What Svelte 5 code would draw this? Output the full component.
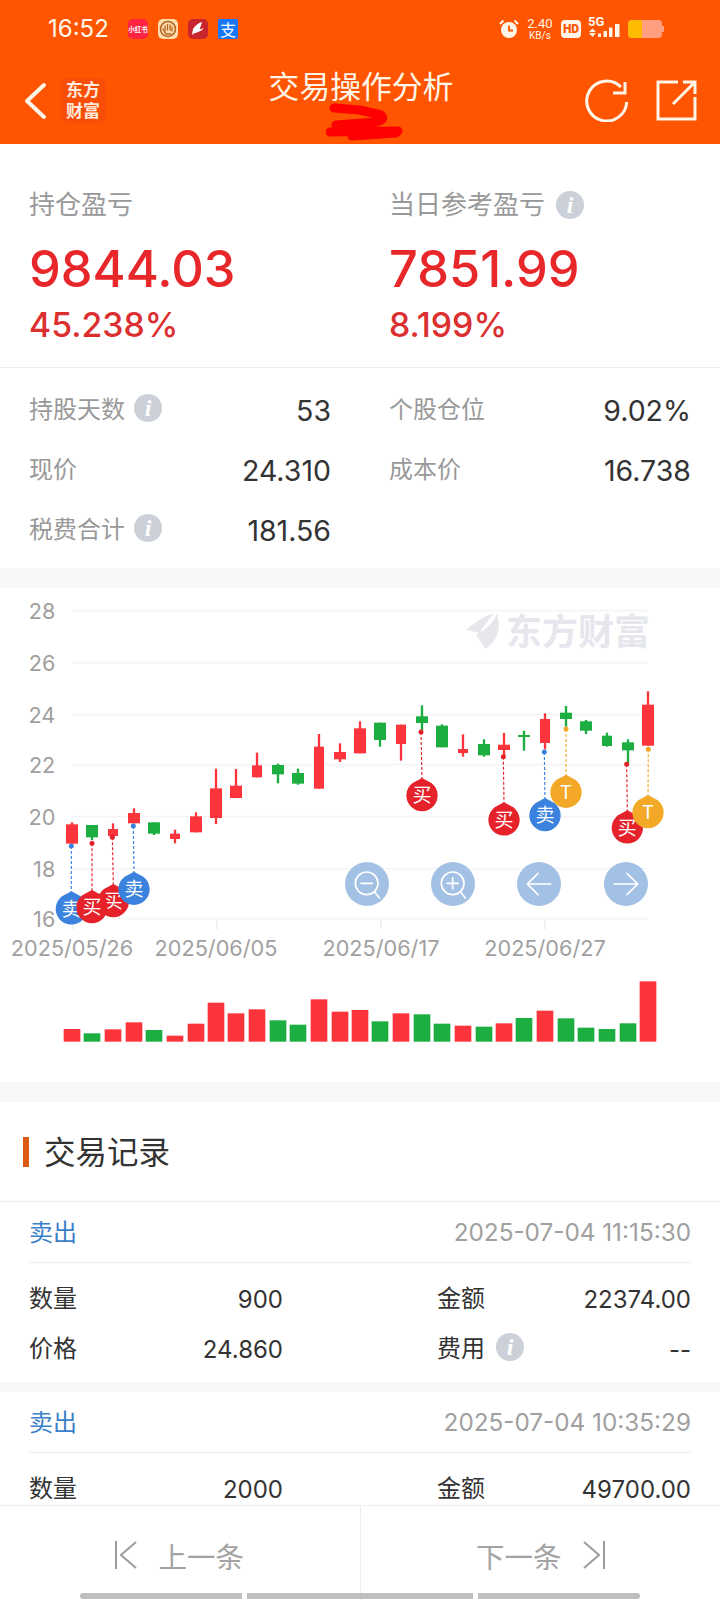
<script>
  const RED = '#fc343c';
  const GREEN = '#1cae41';

  // chart coords are 3x screen px, y measured from screen y=590
  // [left, right, bodyTop, bodyBottom, wickTop, wickBottom, up?]
  const candles = [
    [198, 234, 703, 761, 697, 761, 1],
    [258, 294, 705, 742, 705, 750, 0],
    [324, 354, 717, 738, 700, 748, 1],
    [384, 420, 669, 700, 655, 700, 1],
    [444, 480, 697, 731, 697, 735, 0],
    [510, 540, 731, 747, 719, 760, 1],
    [570, 606, 679, 727, 667, 727, 1],
    [630, 666, 595, 684, 536, 702, 1],
    [690, 726, 587, 624, 537, 624, 1],
    [756, 786, 526, 562, 488, 562, 1],
    [816, 852, 525, 553, 521, 580, 0],
    [876, 912, 549, 581, 536, 584, 0],
    [942, 972, 470, 596, 432, 596, 1],
    [1002, 1038, 486, 508, 460, 516, 1],
    [1062, 1098, 415, 490, 394, 490, 1],
    [1122, 1158, 398, 450, 398, 470, 0],
    [1188, 1218, 404, 462, 404, 512, 1],
    [1248, 1284, 379, 399, 346, 420, 0],
    [1308, 1344, 407, 472, 403, 472, 0],
    [1374, 1404, 477, 489, 433, 500, 1],
    [1434, 1470, 462, 496, 448, 500, 0],
    [1494, 1530, 464, 480, 429, 500, 1],
    [1554, 1590, 435, 441, 422, 482, 0],
    [1620, 1650, 387, 459, 370, 478, 1],
    [1680, 1716, 368, 387, 348, 410, 0],
    [1740, 1776, 394, 422, 390, 432, 0],
    [1806, 1836, 437, 468, 428, 470, 0],
    [1866, 1902, 457, 481, 448, 520, 0],
    [1926, 1962, 344, 467, 304, 467, 1]
  ];

  // tops of the volume bars, bottom is shared
  const volumes = [207, 220, 208, 187, 210, 227, 191, 128, 160, 148, 181, 194, 118, 155, 150, 184, 160, 163, 191, 197, 200, 190, 174, 152, 175, 203, 207, 190, 64];

  const gridY = [62, 218, 374, 524, 680, 836, 986];
  const yLabels = ['28', '26', '24', '22', '20', '18', '16'];

  const dates = [
    { x: 216, tick: 219, label: '2025/05/26' },
    { x: 648, tick: 651, label: '2025/06/05' },
    { x: 1143, tick: 1143, label: '2025/06/17' },
    { x: 1635, tick: 1635, label: '2025/06/27' }
  ];

  const markerColors = { 卖: '#3a82de', 买: '#e5222a', T: '#f3a828' };

  const markers = [
    { x: 214, y: 957, dotX: 214, dotY: 768, t: '卖' },
    { x: 340, y: 935, dotX: 337, dotY: 742, t: '买' },
    { x: 276, y: 953, dotX: 276, dotY: 760, t: '买' },
    { x: 402, y: 898, dotX: 400, dotY: 708, t: '卖' },
    { x: 1266, y: 617, dotX: 1263, dotY: 426, t: '买' },
    { x: 1512, y: 690, dotX: 1510, dotY: 500, t: '买' },
    { x: 1635, y: 677, dotX: 1633, dotY: 486, t: '卖' },
    { x: 1698, y: 607, dotX: 1698, dotY: 417, t: 'T' },
    { x: 1882, y: 714, dotX: 1880, dotY: 523, t: '买' },
    { x: 1944, y: 668, dotX: 1945, dotY: 478, t: 'T' }
  ];

  function drop(x, y) {
    return `M${x} ${y - 53}L${x + 28} ${y - 38}A47 47 0 1 1 ${x - 28} ${y - 38}Z`;
  }

  const records = [
    { side: '卖出', time: '2025-07-04 11:15:30', qty: '900', amount: '22374.00', price: '24.860', fee: '--' },
    { side: '卖出', time: '2025-07-04 10:35:29', qty: '2000', amount: '49700.00' }
  ];
</script>

{#snippet info()}
  <span class="info">i</span>
{/snippet}

<div class="page">
  <header class="top">
    <div class="status">
      <span class="time">16:52</span>
      <div class="apps">
        <span class="app app-xhs">小红书</span>
        <span class="app app-hand">
          <svg viewBox="0 0 20 20" width="20" height="20">
            <circle cx="10" cy="10" r="7.5" fill="none" stroke="#b5651d" stroke-width="1.6" />
            <path d="M7 12V7M9.5 11V5.5M12 11V6M14 12V8M5 10l3 5h5" fill="none" stroke="#b5651d" stroke-width="1.3" stroke-linecap="round" />
          </svg>
        </span>
        <span class="app app-flash">
          <svg viewBox="0 0 20 20" width="20" height="20">
            <path d="M14 3C10 4 7 7 5 10L4 16C7 13 12 14 16 9L11.5 10.5C12.5 8 13.5 5.5 14 3Z" fill="#fff" />
          </svg>
        </span>
        <span class="app app-ali">支</span>
      </div>
      <div class="sys">
        <svg class="alarm" viewBox="0 0 20 20" width="20" height="20">
          <circle cx="10" cy="11" r="8" fill="#fff6ea" />
          <path d="M10 6.5V11.5H14" fill="none" stroke="#ff5500" stroke-width="1.8" />
          <path d="M1 5 4.5 1.5M19 5 15.5 1.5" stroke="#fff6ea" stroke-width="2" />
        </svg>
        <span class="speed"><b>2.40</b><i>KB/s</i></span>
        <span class="hd">HD</span>
        <svg class="signal" viewBox="0 -6 34 28" width="34" height="28">
          <text x="0" y="10" class="fiveg">5G</text>
          <path d="M1 16 4.5 12.5 8 16ZM1 17H8L4.5 21Z" fill="#fff6ea" />
          <path d="M10 17.5h3V21H10ZM15.5 15h3.5V21H15.5ZM21 11.5h3.5V21H21ZM27 8h4.5V21H27Z" fill="#fff6ea" />
        </svg>
        <span class="battery"><span class="level"></span></span>
      </div>
    </div>
    <nav class="bar">
      <div class="bar-left">
        <svg viewBox="0 0 24 40" width="24" height="40">
          <path d="M20 4 3 20l17 16" fill="none" stroke="#fff6ea" stroke-width="4" stroke-linecap="round" stroke-linejoin="round" />
        </svg>
        <span class="logo">东方<br />财富</span>
      </div>
      <h1>交易操作分析</h1>
      <div class="bar-right">
        <svg viewBox="0 0 44 44" width="44" height="44">
          <path d="M36 9A20 20 0 1 0 41.7 24" fill="none" stroke="#fff6ea" stroke-width="3" />
          <path d="M40 4V15H28" fill="none" stroke="#fff6ea" stroke-width="3" />
        </svg>
        <svg viewBox="0 0 44 44" width="44" height="44">
          <path d="M24 4H4V41H41V19M19 26 41 4M29 4H41V16" fill="none" stroke="#fff6ea" stroke-width="3" />
        </svg>
      </div>
    </nav>
    <svg class="scribble" viewBox="0 0 84 44" width="84" height="44">
      <path d="M8 8 34 10 55 15Q60 20 50 22L10 25M4 32 72 31M26 36 70 33" fill="none" stroke="#ff0000" stroke-width="9" stroke-linecap="round" stroke-linejoin="round" />
    </svg>
  </header>

  <div class="content">
    <section class="summary">
      <div class="totals">
        <div class="total">
          <div class="total-label">持仓盈亏</div>
          <div class="total-value">9844.03</div>
          <div class="total-pct">45.238%</div>
        </div>
        <div class="total">
          <div class="total-label">当日参考盈亏 {@render info()}</div>
          <div class="total-value">7851.99</div>
          <div class="total-pct">8.199%</div>
        </div>
      </div>
      <div class="stats">
        <div class="stat"><span class="stat-label">持股天数 {@render info()}</span><span class="stat-value">53</span></div>
        <div class="stat"><span class="stat-label">个股仓位</span><span class="stat-value">9.02%</span></div>
        <div class="stat"><span class="stat-label">现价</span><span class="stat-value">24.310</span></div>
        <div class="stat"><span class="stat-label">成本价</span><span class="stat-value">16.738</span></div>
        <div class="stat"><span class="stat-label">税费合计 {@render info()}</span><span class="stat-value">181.56</span></div>
      </div>
    </section>

    <section class="chart">
      <svg viewBox="0 -6 2160 1482" width="720" height="494">
        {#each gridY as y}
          <line x1="216" x2="1944" y1={y} y2={y} stroke="#f5f5f5" stroke-width="5" />
        {/each}

        <!-- watermark -->
        <path d="M1398 120C1420 100 1450 80 1482 70 1465 90 1450 110 1440 128 1425 125 1410 122 1398 120Z M1490 72C1505 110 1495 150 1455 178 1450 165 1440 150 1428 135 1455 120 1480 100 1490 72Z" fill="#e6e7ec" />
        <text class="mark" x="1518" y="165">东方财富</text>

        {#each yLabels as label, i}
          <text class="axis" x="166" y={gridY[i] + 24} text-anchor="end">{label}</text>
        {/each}
        {#each dates as d}
          <line x1={d.tick} x2={d.tick} y1="986" y2="1018" stroke="#eeeeee" stroke-width="5" />
          <text class="axis" x={d.x} y="1098" text-anchor="middle">{d.label}</text>
        {/each}

        {#each candles as [l, r, top, bottom, wickTop, wickBottom, up]}
          <rect x={(l + r) / 2 - 3.5} y={wickTop} width="7" height={wickBottom - wickTop} fill={up ? RED : GREEN} />
          <rect x={l} y={top} width={r - l} height={bottom - top} fill={up ? RED : GREEN} />
        {/each}

        {#each volumes as top, i}
          <rect x={(candles[i][0] + candles[i][1]) / 2 - 25} y={1110 + top} width="50" height={245 - top} fill={candles[i][6] ? RED : GREEN} />
        {/each}

        {#each markers as m}
          <line x1={m.dotX} x2={m.x} y1={m.dotY} y2={m.y - 50} stroke={markerColors[m.t]} stroke-width="3.5" stroke-dasharray="9 6" />
          <circle cx={m.dotX} cy={m.dotY} r="7.5" fill={markerColors[m.t]} />
          <path d={drop(m.x, m.y)} fill={markerColors[m.t]} />
          <text class="marker" x={m.x} y={m.y + 20} text-anchor="middle">{m.t}</text>
        {/each}

        <g fill="none" stroke="#fff" stroke-width="5" stroke-linecap="round">
          <circle cx="1101" cy="882" r="66" fill="#a3c1e4" stroke="none" />
          <circle cx="1100" cy="880" r="34" />
          <path d="M1083 880H1117M1124 906 1138 924" />
          <circle cx="1359" cy="882" r="66" fill="#a3c1e4" stroke="none" />
          <circle cx="1358" cy="880" r="34" />
          <path d="M1341 880H1375M1358 863V897M1382 906 1396 924" />
          <circle cx="1617" cy="882" r="66" fill="#a3c1e4" stroke="none" />
          <path d="M1652 882H1582M1614 850 1582 882 1614 914" />
          <circle cx="1878" cy="882" r="66" fill="#a3c1e4" stroke="none" />
          <path d="M1843 882H1913M1881 850 1913 882 1881 914" />
        </g>
      </svg>
    </section>

    <section class="trades">
      <h2><span class="accent"></span><span class="trades-title">交易记录</span></h2>
      {#each records as rec}
        <article class="record">
          <div class="record-head">
            <span class="side">{rec.side}</span>
            <span class="when">{rec.time}</span>
          </div>
          <div class="record-body">
            <div class="cell"><span class="cell-label">数量</span><span class="num">{rec.qty}</span></div>
            <div class="cell"><span class="cell-label">金额</span><span class="num">{rec.amount}</span></div>
            {#if rec.price}
              <div class="cell"><span class="cell-label">价格</span><span class="num">{rec.price}</span></div>
              <div class="cell"><span class="cell-label">费用 {@render info()}</span><span class="num">{rec.fee}</span></div>
            {/if}
          </div>
        </article>
      {/each}
    </section>
  </div>

  <footer class="pager">
    <div class="pager-btn">
      <svg viewBox="0 0 22 30" width="22" height="30">
        <path d="M1 1V29M21 2 6 15 21 28" fill="none" stroke="#9c9c9c" stroke-width="2" />
      </svg>
      <span>上一条</span>
    </div>
    <div class="pager-btn next">
      <span>下一条</span>
      <svg viewBox="0 0 22 30" width="22" height="30">
        <path d="M21 1V29M1 2 16 15 1 28" fill="none" stroke="#9c9c9c" stroke-width="2" />
      </svg>
    </div>
    <div class="pills">
      <span class="pill pill-a"></span>
      <span class="pill pill-b"></span>
      <span class="pill pill-c"></span>
    </div>
  </footer>
</div>

<style>
  :global(body) {
    margin: 0;
    background: #f7f7f7;
  }

  .page {
    position: relative;
    display: flex;
    flex-direction: column;
    width: 720px;
    height: 1600px;
    overflow: hidden;
    background: #f7f7f7;
    font-family: Inter, "Noto Sans CJK SC", sans-serif;
    color: #333;
  }

  .top {
    position: relative;
    flex: none;
    height: 144px;
    background: #ff5500;
    color: #fff6ea;
  }

  .status {
    display: flex;
    align-items: center;
    height: 58px;
    padding: 0 58px 0 48px;
  }

  .time {
    width: 62px;
    font-size: 24px;
    line-height: 58px;
  }

  .apps {
    display: flex;
    gap: 10px;
    margin-left: 18px;
  }

  .app {
    display: flex;
    align-items: center;
    justify-content: center;
    width: 20px;
    height: 20px;
    border-radius: 5px;
    overflow: hidden;
    color: #fff;
  }

  .app-xhs {
    background: #ff2442;
    font-size: 6.5px;
    font-weight: 700;
    white-space: nowrap;
  }

  .app-hand {
    background: #fddcb0;
  }

  .app-flash {
    background: #c8252f;
  }

  .app-ali {
    background: #1677ff;
    font-size: 16px;
    border-radius: 2px;
  }

  .sys {
    display: flex;
    align-items: center;
    margin-left: auto;
    height: 24px;
  }

  .speed {
    display: flex;
    flex-direction: column;
    align-items: center;
    width: 26px;
    margin-left: 8px;
    font-family: Roboto, sans-serif;
  }

  .speed b {
    font-size: 13px;
    font-weight: 400;
    line-height: 12px;
  }

  .speed i {
    font-size: 10px;
    font-style: normal;
    line-height: 11px;
  }

  .hd {
    width: 20px;
    height: 18px;
    margin-left: 8px;
    border-radius: 4px;
    background: #fff6ea;
    color: #ff5500;
    font-family: Roboto, sans-serif;
    font-size: 12px;
    font-weight: 900;
    line-height: 18px;
    text-align: center;
  }

  .signal {
    margin: -10px 0 0 7px;
  }

  .fiveg {
    font-family: Roboto, sans-serif;
    font-size: 13px;
    font-weight: 700;
    fill: #fff6ea;
  }

  .battery {
    position: relative;
    display: block;
    width: 34px;
    height: 18px;
    margin-left: 6px;
    border-radius: 4px;
    background: #ff9f80;
  }

  .battery::after {
    content: '';
    position: absolute;
    right: -2px;
    top: 6px;
    width: 2px;
    height: 6px;
    background: #ff9f80;
  }

  .level {
    display: block;
    width: 14px;
    height: 18px;
    border-radius: 4px 0 0 4px;
    background: #ffbb00;
  }

  .bar {
    display: grid;
    grid-template-columns: 1fr auto 1fr;
    align-items: center;
    height: 86px;
    padding: 0 22px 0 24px;
  }

  .bar-left {
    display: flex;
    align-items: center;
    gap: 12px;
  }

  .logo {
    width: 46px;
    height: 46px;
    border-radius: 8px;
    background: #f84e08;
    color: #ffe9dd;
    font-size: 17px;
    font-weight: 700;
    line-height: 21px;
    text-align: center;
    padding-top: 2px;
    box-sizing: border-box;
  }

  h1 {
    margin: -28px 0 0;
    font-size: 30.8px;
    font-weight: 400;
    line-height: 34px;
  }

  .bar-right {
    display: flex;
    justify-content: flex-end;
    gap: 25px;
    margin-top: -2px;
  }

  .scribble {
    position: absolute;
    left: 326px;
    top: 100px;
  }

  .content {
    flex: 1;
    min-height: 0;
    overflow: hidden;
  }

  .summary {
    background: #fff;
    margin-bottom: 20px;
  }

  .totals {
    display: grid;
    grid-template-columns: 360px 1fr;
    padding: 44px 30px 22px 29px;
    border-bottom: 1px solid #eeeeee;
  }

  .total-label {
    display: flex;
    align-items: center;
    gap: 11px;
    font-size: 26px;
    line-height: 34px;
    color: #999;
  }

  .total-value {
    margin-top: 17px;
    font-size: 50.5px;
    font-weight: 500;
    line-height: 60px;
    color: #e8272a;
  }

  .total-pct {
    margin-top: 6px;
    font-size: 33.8px;
    font-weight: 500;
    line-height: 40px;
    color: #db2f30;
  }

  .info {
    display: inline-block;
    flex: none;
    width: 28px;
    height: 28px;
    border-radius: 50%;
    background: #ccd0d8;
    color: #fff;
    font-family: "Liberation Serif", serif;
    font-size: 24px;
    font-style: italic;
    font-weight: 700;
    line-height: 28px;
    text-align: center;
  }

  .stats {
    display: grid;
    grid-template-columns: 302px 302px;
    column-gap: 58px;
    grid-auto-rows: 60px;
    padding: 12px 29px 8px 29px;
  }

  .stat {
    display: flex;
    align-items: center;
    justify-content: space-between;
  }

  .stat-label {
    display: flex;
    align-items: center;
    gap: 9px;
    padding-bottom: 5px;
    font-size: 24px;
    color: #999;
  }

  .stat-value {
    font-size: 28.5px;
    color: #333;
  }

  .chart {
    height: 494px;
    background: #fff;
    margin-bottom: 20px;
  }

  .chart svg {
    display: block;
  }

  .axis {
    font-size: 65px;
    fill: #a0a0a0;
  }

  .mark {
    font-size: 108px;
    font-weight: 700;
    fill: #e6e7ec;
  }

  .marker {
    font-size: 57px;
    fill: #fff;
  }

  .trades {
    background: #f7f7f7;
  }

  h2 {
    display: flex;
    align-items: center;
    gap: 15px;
    height: 100px;
    margin: 0;
    padding: 0 0 0 23px;
    box-sizing: border-box;
    background: #fff;
    font-size: 31.5px;
    font-weight: 400;
    border-bottom: 1px solid #eeeeee;
  }

  .accent {
    width: 6px;
    height: 30px;
    background: #dd5a14;
  }

  .trades-title {
    padding-bottom: 4px;
  }

  .record {
    margin-bottom: 10px;
    padding: 0 29px 8px 29px;
    background: #fff;
  }

  .record-head {
    display: flex;
    align-items: center;
    justify-content: space-between;
    height: 60px;
    border-bottom: 1px solid #eeeeee;
  }

  .side {
    padding-bottom: 3px;
    font-size: 24px;
    color: #3b7fc9;
  }

  .when {
    font-size: 24.3px;
    color: #a0a0a0;
  }

  .record-body {
    display: grid;
    grid-template-columns: 254px 254px;
    justify-content: space-between;
    grid-auto-rows: 50px;
    padding-top: 11px;
  }

  .cell {
    display: flex;
    align-items: center;
    justify-content: space-between;
    font-size: 24px;
  }

  .cell-label {
    display: flex;
    align-items: center;
    gap: 11px;
    padding-bottom: 5px;
  }

  .num {
    font-size: 24px;
  }

  .pager {
    position: relative;
    flex: none;
    display: flex;
    height: 95px;
    border-top: 1px solid #eeeeee;
    background: #fff;
    box-sizing: border-box;
  }

  .pager-btn {
    flex: 1;
    display: flex;
    align-items: center;
    justify-content: center;
    gap: 21px;
    padding-top: 4px;
    box-sizing: border-box;
    font-size: 28.5px;
    color: #a3a3a3;
  }

  .pager-btn.next {
    border-left: 1px solid #eeeeee;
  }

  .pills {
    position: absolute;
    left: 80px;
    top: 87px;
    display: flex;
    gap: 5px;
  }

  .pill {
    display: block;
    height: 6px;
    background: #bfbfbf;
  }

  .pill-a {
    width: 162px;
    border-radius: 3px 0 0 3px;
  }

  .pill-b {
    width: 226px;
  }

  .pill-c {
    width: 162px;
    border-radius: 0 3px 3px 0;
  }
</style>
